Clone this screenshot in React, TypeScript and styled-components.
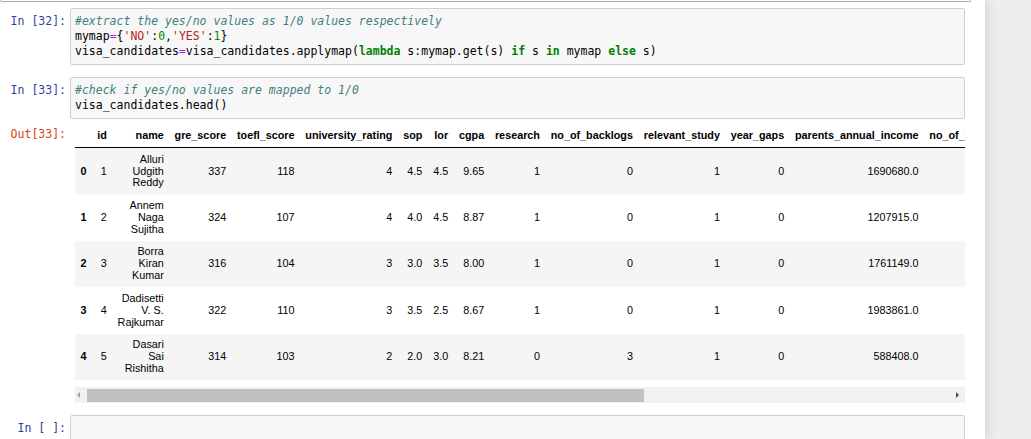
import React from "react";
import styled, { createGlobalStyle } from "styled-components";

const Global = createGlobalStyle`
  html, body { margin: 0; padding: 0; }
  body { background: #eeeeee; overflow: hidden; }
`;

const Page = styled.div`
  display: flex;
  height: 439px;
  overflow: hidden;
`;

const Notebook = styled.div`
  width: 985px;
  flex: none;
  box-sizing: border-box;
  padding-right: 14px;
  background: #ffffff;
  box-shadow: 0 0 12px 1px rgba(87, 87, 87, 0.2);
  min-height: 439px;
`;

const PrevCell = styled.div`
  height: 1px;
  border: 1px solid #ababab;
  border-top: none;
  border-radius: 0 0 2px 2px;
`;

const Cell = styled.div`
  border: 1px solid transparent;
  padding: 5px;
  display: flex;
  flex-direction: column;
`;

const Row = styled.div`
  display: flex;
  align-items: flex-start;
`;

const Prompt = styled.div<{ $out?: boolean }>`
  width: 64px;
  flex: none;
  box-sizing: border-box;
  padding-right: 4px;
  padding-top: ${(p) => (p.$out ? "7.5px" : "6px")};
  text-align: right;
  font-family: "DejaVu Sans Mono", "Liberation Mono", monospace;
  font-size: 11.5px;
  line-height: 15px;
  color: ${(p) => (p.$out ? "#D84315" : "#303F9F")};
  white-space: pre;
`;

const InputArea = styled.div`
  flex: 1;
  min-width: 0;
  border: 1px solid #cfcfcf;
  border-radius: 2px;
  background: #f7f7f7;
  padding: 5px 4px;
  font-family: "DejaVu Sans Mono", "Liberation Mono", monospace;
  font-size: 11.5px;
  line-height: 15px;
  min-height: 15px;
  color: #000;
  white-space: pre;
`;

const CodeLine = styled.div`
  height: 15px;
`;

type Kind = "c" | "o" | "s" | "n" | "k";
const tokColor: Record<Kind, string> = {
  c: "#408080",
  o: "#AA22FF",
  s: "#BA2121",
  n: "#008800",
  k: "#008000",
};

const Tok = styled.span<{ $k: Kind }>`
  color: ${(p) => tokColor[p.$k]};
  font-style: ${(p) => (p.$k === "c" ? "italic" : "normal")};
  font-weight: ${(p) => (p.$k === "k" ? "bold" : "normal")};
`;

const OutputSub = styled.div`
  flex: 1;
  min-width: 0;
  padding: 5.6px 0 0 5px;
`;

const TableScroll = styled.div`
  overflow: hidden;
`;

const Table = styled.table`
  border-collapse: collapse;
  border-spacing: 0;
  font-family: "Liberation Sans", Arial, sans-serif;
  font-size: 10.8px;
  line-height: 1.1;
  color: #000;
`;

const HeadCell = styled.th`
  text-align: right;
  vertical-align: middle;
  padding: 5.4px;
  font-weight: bold;
  white-space: nowrap;
  border-bottom: 1px solid #000;
`;

const IndexCell = styled.th`
  text-align: right;
  vertical-align: middle;
  padding: 5.4px;
  font-weight: bold;
`;

const DataCell = styled.td`
  text-align: right;
  vertical-align: middle;
  padding: 5.4px;
  white-space: normal;
`;

const BodyRow = styled.tr`
  &:nth-child(odd) {
    background: #f5f5f5;
  }
`;

const Track = styled.div`
  margin-top: 6.5px;
  height: 16px;
  background: #f1f1f1;
  display: flex;
  align-items: center;
`;

const ScrollBtn = styled.div<{ $right?: boolean }>`
  flex: none;
  box-sizing: border-box;
  width: ${(p) => (p.$right ? "15px" : "12px")};
  height: 16px;
  display: flex;
  align-items: center;
  justify-content: ${(p) => (p.$right ? "flex-end" : "flex-start")};
  padding: ${(p) => (p.$right ? "0 6px 0 0" : "0 0 0 2px")};
  margin-left: ${(p) => (p.$right ? "auto" : "0")};
`;

const Arrow = styled.span<{ $right?: boolean }>`
  width: 0;
  height: 0;
  border-top: 3px solid transparent;
  border-bottom: 3px solid transparent;
  ${(p) =>
    p.$right
      ? "border-left: 3.5px solid #505050;"
      : "border-right: 3.5px solid #a3a3a3;"}
`;

const Thumb = styled.div`
  align-self: flex-start;
  margin-top: 2px;
  height: 13px;
  background: #c1c1c1;
  flex: none;
`;

const columns = [
  "id",
  "name",
  "gre_score",
  "toefl_score",
  "university_rating",
  "sop",
  "lor",
  "cgpa",
  "research",
  "no_of_backlogs",
  "relevant_study",
  "year_gaps",
  "parents_annual_income",
  "no_of_times_applied",
];

const rows: (string | number)[][] = [
  [1, "Alluri Udgith Reddy", 337, 118, 4, "4.5", "4.5", "9.65", 1, 0, 1, 0, "1690680.0", 0],
  [2, "Annem Naga Sujitha", 324, 107, 4, "4.0", "4.5", "8.87", 1, 0, 1, 0, "1207915.0", 0],
  [3, "Borra Kiran Kumar", 316, 104, 3, "3.0", "3.5", "8.00", 1, 0, 1, 0, "1761149.0", 1],
  [4, "Dadisetti V. S. Rajkumar", 322, 110, 3, "3.5", "2.5", "8.67", 1, 0, 1, 0, "1983861.0", 0],
  [5, "Dasari Sai Rishitha", 314, 103, 2, "2.0", "3.0", "8.21", 0, 3, 1, 0, "588408.0", 1],
];

export default function App() {
  return (
    <>
      <Global />
      <Page>
        <Notebook>
          <PrevCell />
          <Cell>
            <Row>
              <Prompt>In [32]:</Prompt>
              <InputArea>
                <CodeLine>
                  <Tok $k="c">#extract the yes/no values as 1/0 values respectively</Tok>
                </CodeLine>
                <CodeLine>
                  mymap<Tok $k="o">=</Tok>
                  {"{"}
                  <Tok $k="s">'NO'</Tok>:<Tok $k="n">0</Tok>,<Tok $k="s">'YES'</Tok>:
                  <Tok $k="n">1</Tok>
                  {"}"}
                </CodeLine>
                <CodeLine>
                  visa_candidates<Tok $k="o">=</Tok>visa_candidates.applymap(
                  <Tok $k="k">lambda</Tok> s:mymap.get(s) <Tok $k="k">if</Tok> s{" "}
                  <Tok $k="k">in</Tok> mymap <Tok $k="k">else</Tok> s)
                </CodeLine>
              </InputArea>
            </Row>
          </Cell>
          <Cell>
            <Row>
              <Prompt>In [33]:</Prompt>
              <InputArea>
                <CodeLine>
                  <Tok $k="c">#check if yes/no values are mapped to 1/0</Tok>
                </CodeLine>
                <CodeLine>visa_candidates.head()</CodeLine>
              </InputArea>
            </Row>
            <Row>
              <Prompt $out>Out[33]:</Prompt>
              <OutputSub>
                <TableScroll>
                  <Table>
                    <thead>
                      <tr>
                        <HeadCell />
                        {columns.map((c) => (
                          <HeadCell key={c}>{c}</HeadCell>
                        ))}
                      </tr>
                    </thead>
                    <tbody>
                      {rows.map((r, i) => (
                        <BodyRow key={i}>
                          <IndexCell>{i}</IndexCell>
                          {r.map((v, j) => (
                            <DataCell key={j}>{v}</DataCell>
                          ))}
                        </BodyRow>
                      ))}
                    </tbody>
                  </Table>
                </TableScroll>
                <Track>
                  <ScrollBtn>
                    <Arrow />
                  </ScrollBtn>
                  <Thumb style={{ width: 557 }} />
                  <ScrollBtn $right>
                    <Arrow $right />
                  </ScrollBtn>
                </Track>
              </OutputSub>
            </Row>
          </Cell>
          <Cell>
            <Row>
              <Prompt>In [ ]:</Prompt>
              <InputArea>
                <CodeLine />
              </InputArea>
            </Row>
          </Cell>
        </Notebook>
      </Page>
    </>
  );
}
